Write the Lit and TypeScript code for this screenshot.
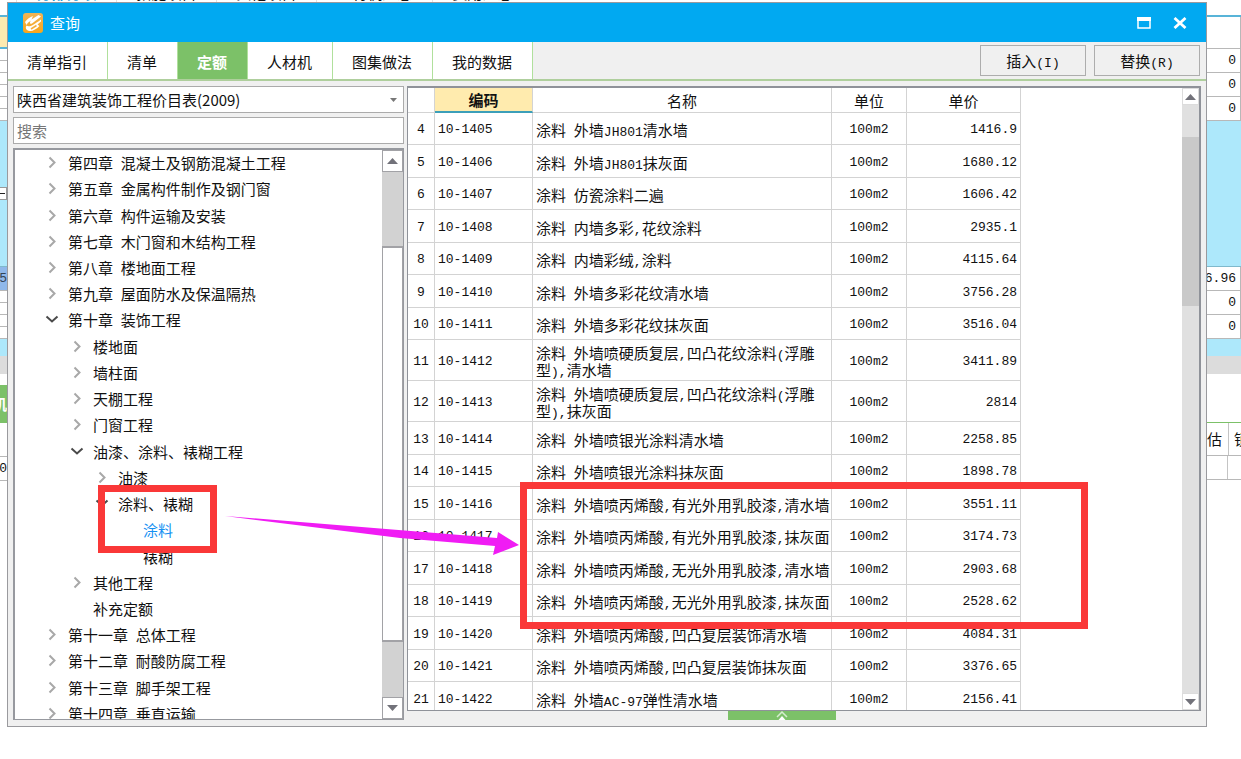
import { LitElement, html, css, svg } from "lit";
import { customElement, property, state } from "lit/decorators.js";
import { classMap } from "lit/directives/class-map.js";

type Node = { text: string; level: number; kind: "closed" | "open" | "leaf"; active?: boolean };
type Row = { no: number; code: string; name: string; price: string };

const node = (text: string, level: number, kind: Node["kind"] = "closed", active = false): Node => ({
  text,
  level,
  kind,
  active,
});

const NODES: Node[] = [
  node("第四章 混凝土及钢筋混凝土工程", 1),
  node("第五章 金属构件制作及钢门窗", 1),
  node("第六章 构件运输及安装", 1),
  node("第七章 木门窗和木结构工程", 1),
  node("第八章 楼地面工程", 1),
  node("第九章 屋面防水及保温隔热", 1),
  node("第十章 装饰工程", 1, "open"),
  node("楼地面", 2),
  node("墙柱面", 2),
  node("天棚工程", 2),
  node("门窗工程", 2),
  node("油漆、涂料、裱糊工程", 2, "open"),
  node("油漆", 3),
  node("涂料、裱糊", 3, "open"),
  node("涂料", 4, "leaf", true),
  node("裱糊", 4, "leaf"),
  node("其他工程", 2),
  node("补充定额", 2, "leaf"),
  node("第十一章 总体工程", 1),
  node("第十二章 耐酸防腐工程", 1),
  node("第十三章 脚手架工程", 1),
  node("第十四章 垂直运输", 1),
];

const ROWS: Row[] = (
  [
    ["涂料 外墙JH801清水墙", "1416.9"],
    ["涂料 外墙JH801抹灰面", "1680.12"],
    ["涂料 仿瓷涂料二遍", "1606.42"],
    ["涂料 内墙多彩,花纹涂料", "2935.1"],
    ["涂料 内墙彩绒,涂料", "4115.64"],
    ["涂料 外墙多彩花纹清水墙", "3756.28"],
    ["涂料 外墙多彩花纹抹灰面", "3516.04"],
    ["涂料 外墙喷硬质复层,凹凸花纹涂料(浮雕型),清水墙", "3411.89"],
    ["涂料 外墙喷硬质复层,凹凸花纹涂料(浮雕型),抹灰面", "2814"],
    ["涂料 外墙喷银光涂料清水墙", "2258.85"],
    ["涂料 外墙喷银光涂料抹灰面", "1898.78"],
    ["涂料 外墙喷丙烯酸,有光外用乳胶漆,清水墙", "3551.11"],
    ["涂料 外墙喷丙烯酸,有光外用乳胶漆,抹灰面", "3174.73"],
    ["涂料 外墙喷丙烯酸,无光外用乳胶漆,清水墙", "2903.68"],
    ["涂料 外墙喷丙烯酸,无光外用乳胶漆,抹灰面", "2528.62"],
    ["涂料 外墙喷丙烯酸,凹凸复层装饰清水墙", "4084.31"],
    ["涂料 外墙喷丙烯酸,凹凸复层装饰抹灰面", "3376.65"],
    ["涂料 外墙AC-97弹性清水墙", "2156.41"],
  ] as [string, string][]
).map(([name, price], i) => ({ no: i + 4, code: `10-${1405 + i}`, name, price }));

/* Half-width characters are set in the monospaced face, the rest in the CJK face. */
const mixed = (text: string) =>
  text
    .split(/([\x20-\x7e]+)/)
    .filter(Boolean)
    .map((part) => (/^[\x20-\x7e]/.test(part) ? html`<span class="mono run">${part}</span>` : part));

const shared = css`
  * {
    box-sizing: border-box;
  }
  button,
  input,
  select {
    font: inherit;
    color: inherit;
    margin: 0;
    padding: 0;
    border: 0;
    border-radius: 0;
    background: none;
  }
  .mono {
    font-family: "Liberation Mono", monospace;
    font-size: 13px;
  }
  .run {
    line-height: 0;
  }
`;

@customElement("scroll-track")
class ScrollTrack extends LitElement {
  @property({ reflect: true }) variant = "light";

  static styles = [
    shared,
    css`
      :host {
        display: flex;
        flex-direction: column;
        flex: 0 0 17px;
        background: #e0e0e0;
      }
      :host([variant="framed"]) {
        flex-basis: 21px;
        background: #d2d2d2;
      }
      .step {
        display: grid;
        place-items: center;
        height: 17px;
        background: #fff;
        border: 1px solid #dcdcdc;
      }
      .before {
        flex: 32 1 0;
      }
      .thumb {
        flex: 169 1 0;
        background: #c9c9c9;
      }
      .after {
        flex: 387 1 0;
      }
      :host([variant="framed"]) .step {
        height: 22px;
        border-color: #a2a2a6;
      }
      :host([variant="framed"]) .before {
        flex-grow: 75;
      }
      :host([variant="framed"]) .thumb {
        flex-grow: 395;
        background: #fff;
        border: 1px solid #a2a2a6;
        border-width: 2px 1px;
      }
      :host([variant="framed"]) .after {
        flex-grow: 56;
      }
    `,
  ];

  render() {
    return html`
      <button class="step" aria-label="向上滚动">
        <svg width="11" height="6" viewBox="0 0 11 6"><path d="M0 6 5.5 0 11 6z" fill="#72727a" /></svg>
      </button>
      <div class="before"></div>
      <div class="thumb"></div>
      <div class="after"></div>
      <button class="step" aria-label="向下滚动">
        <svg width="11" height="6" viewBox="0 0 11 6"><path d="M0 0 5.5 6 11 0z" fill="#72727a" /></svg>
      </button>
    `;
  }
}

@customElement("chapter-tree")
class ChapterTree extends LitElement {
  static styles = [
    shared,
    css`
      :host {
        box-sizing: border-box;
        display: flex;
        flex: 1;
        min-height: 0;
        overflow: hidden;
        background: #fff;
        border: 1px solid #97999f;
        border-width: 2px 1px 1px 2px;
      }
      .list {
        flex: 1;
        display: grid;
        grid-auto-rows: 1fr;
        margin: 0 0 -8px;
        padding: 0;
        list-style: none;
      }
      .item {
        display: flex;
        align-items: center;
        gap: 8px;
        line-height: 20px;
        white-space: nowrap;
      }
      .l1 {
        padding-left: 29px;
      }
      .l2 {
        padding-left: 54px;
      }
      .l3 {
        padding-left: 79px;
      }
      .l4 {
        padding-left: 104px;
      }
      .toggle {
        display: grid;
        place-items: center;
        flex: 0 0 16px;
        height: 16px;
      }
      .active {
        color: #1590f2;
      }
    `,
  ];

  private glyph(kind: Node["kind"]) {
    if (kind === "leaf") return html`<span class="toggle"></span>`;
    const open = kind === "open";
    return html`<button class="toggle" aria-label=${open ? "收起" : "展开"} aria-expanded=${open}>
      <svg width="14" height="14" viewBox="0 0 14 14" fill="none" stroke-width="2">
        ${open
          ? svg`<path d="M1.500 3.500 7 8.500 12.500 3.500" stroke="#4a4a4a"/>`
          : svg`<path d="M4.500 1.500 9.500 6.500 4.500 11.500" stroke="#a8a8a8"/>`}
      </svg>
    </button>`;
  }

  render() {
    return html`
      <ul class="list">
        ${NODES.map(
          (n) => html`<li class="item l${n.level}">
            ${this.glyph(n.kind)}<span class=${classMap({ active: !!n.active })}>${mixed(n.text)}</span>
          </li>`
        )}
      </ul>
      <scroll-track variant="framed"></scroll-track>
    `;
  }
}

@customElement("price-table")
class PriceTable extends LitElement {
  static styles = [
    shared,
    css`
      :host {
        box-sizing: border-box;
        display: flex;
        flex: 1;
        min-height: 0;
        overflow: hidden;
        background: #fff;
        border: 1px solid #8f9299;
        border-width: 2px 2px 1px 1px;
      }
      .area {
        flex: 1;
        overflow: hidden;
      }
      .grid {
        width: 613px;
        table-layout: fixed;
        border-collapse: separate;
        border-spacing: 0;
        line-height: 17px;
      }
      .c-no {
        width: 27px;
      }
      .c-code {
        width: 98px;
      }
      .c-unit {
        width: 75px;
      }
      .c-price {
        width: 114px;
      }
      th,
      td {
        padding: 0 3px;
        border: 0 solid #d3d3d3;
        border-width: 0 1px 1px 0;
        font-weight: normal;
        vertical-align: middle;
      }
      td {
        padding-top: 2px;
      }
      .head {
        height: 25px;
      }
      .sorted {
        background: #ffebae;
        border-bottom: 2px solid #3c9fb9;
        font-weight: bold;
      }
      .row {
        height: 32px;
      }
      .row:nth-child(even) {
        height: 33px;
      }
      .row.tall {
        height: 41px;
      }
      .no,
      .unit {
        text-align: center;
      }
      .no {
        padding-left: 0;
        padding-right: 0;
      }
      .name {
        padding-right: 0;
      }
      .price {
        text-align: right;
      }
    `,
  ];

  render() {
    return html`
      <div class="area">
        <table class="grid">
          <colgroup>
            <col class="c-no" />
            <col class="c-code" />
            <col />
            <col class="c-unit" />
            <col class="c-price" />
          </colgroup>
          <thead>
            <tr class="head">
              <th></th>
              <th class="sorted" scope="col">编码</th>
              <th scope="col">名称</th>
              <th scope="col">单位</th>
              <th scope="col">单价</th>
            </tr>
          </thead>
          <tbody>
            ${ROWS.map(
              (r) => html`<tr class=${classMap({ row: true, tall: r.name.length > 24 })}>
                <td class="no mono">${r.no}</td>
                <td class="mono">${r.code}</td>
                <td class="name">${mixed(r.name)}</td>
                <td class="unit mono">100m2</td>
                <td class="price mono">${r.price}</td>
              </tr>`
            )}
          </tbody>
        </table>
      </div>
      <scroll-track></scroll-track>
    `;
  }
}

@customElement("query-window")
class QueryWindow extends LitElement {
  @state() private tab = "定额";

  static styles = [
    shared,
    css`
      :host {
        box-sizing: border-box;
        display: flex;
        flex-direction: column;
        min-width: 0;
        min-height: 0;
        background: #f0f0f0;
        border: 1px solid #9a9a9e;
      }
      .title {
        display: flex;
        align-items: center;
        flex: 0 0 39px;
        gap: 7px;
        padding: 0 18px 0 15px;
        background: #01a9f1;
        color: #fff;
      }
      .caption {
        flex: 1;
      }
      .ctl {
        display: grid;
        place-items: center;
        width: 16px;
        height: 16px;
      }
      .ctl + .ctl {
        margin-left: 13px;
      }
      .bar {
        display: flex;
        align-items: center;
        flex: 0 0 39px;
        border-bottom: 2px solid #afcf9d;
      }
      .tabs {
        display: flex;
        align-self: stretch;
        flex: 1;
      }
      .tab {
        padding: 3px 20px 0 19px;
        background: #fff;
        border-right: 1px solid #b0e09c;
      }
      .tab.on {
        background: #7cc168;
        color: #fff;
        font-weight: bold;
      }
      .cmd {
        width: 106px;
        height: 31px;
        margin-right: 8px;
        background: #f0f0f0;
        border: 1px solid #adadad;
      }
      .cmd:last-child {
        margin-right: 6px;
      }
      .body {
        display: flex;
        flex: 1;
        min-height: 0;
        gap: 3px;
        padding: 5px 5px 6px;
      }
      .side {
        display: flex;
        flex-direction: column;
        flex: 0 0 391px;
        gap: 4px;
      }
      .field {
        position: relative;
        display: flex;
        flex: 0 0 27px;
        background: #fff;
        border: 1px solid #ababab;
      }
      .field > select,
      .field > input {
        appearance: none;
        width: 100%;
        padding: 0 3px;
        outline: 0;
      }
      .field > input::placeholder {
        color: #767676;
        opacity: 1;
      }
      .caret {
        position: absolute;
        right: 6px;
        top: 11px;
        pointer-events: none;
      }
      .main {
        display: flex;
        flex-direction: column;
        flex: 1;
        min-width: 0;
      }
      .handle {
        display: grid;
        place-items: center;
        flex: 0 0 9px;
        width: 108px;
        margin-left: 321px;
        background: #7cc168;
      }
    `,
  ];

  render() {
    const tabs = ["清单指引", "清单", "定额", "人材机", "图集做法", "我的数据"];
    return html`
      <header class="title">
        <svg width="20" height="20" viewBox="0 0 20 20">
          <defs>
            <linearGradient id="g" x1="0" y1="0" x2="0" y2="1">
              <stop offset="0" stop-color="#f0b456" />
              <stop offset="1" stop-color="#f8a61a" />
            </linearGradient>
          </defs>
          <rect width="20" height="20" rx="3" fill="url(#g)" />
          <path
            d="M2 9C4 6 7 4 10 3L8.500 6.500 15.500 2 18 3.500 9 10.500C7 11.500 6 10 8 7.500 5.500 9 4 10.500 3.500 12z"
            fill="#fff"
          />
          <path d="M3.500 12.500C6 14.500 9 13 18 6.500L18 8.500 14.500 11.500 16.500 13C13 17 7 19.500 4 17 2.500 15.500 2.500 14 3.500 12.500z" fill="#fff" />
          <path d="M8 16 13.500 12.500" stroke="#f6b03a" stroke-width="1.500" />
        </svg>
        <span class="caption">查询</span>
        <button class="ctl" aria-label="最大化">
          <svg width="14" height="12" viewBox="0 0 14 12">
            <path d="M1 1H13V11H1z" fill="none" stroke="#fff" stroke-width="1.500" />
            <path d="M0 0H14V4H0z" fill="#fff" />
          </svg>
        </button>
        <button class="ctl" aria-label="关闭">
          <svg width="14" height="12" viewBox="0 0 14 12">
            <path d="M1.500 1 12.500 11M12.500 1 1.500 11" stroke="#fff" stroke-width="2.800" />
          </svg>
        </button>
      </header>
      <div class="bar">
        <div class="tabs" role="tablist">
          ${tabs.map(
            (t) => html`<button
              role="tab"
              aria-selected=${t === this.tab}
              class=${classMap({ tab: true, on: t === this.tab })}
              @click=${() => (this.tab = t)}
            >
              ${t}
            </button>`
          )}
        </div>
        <button class="cmd">${mixed("插入(I)")}</button>
        <button class="cmd">${mixed("替换(R)")}</button>
      </div>
      <div class="body">
        <div class="side">
          <div class="field">
            <select aria-label="定额库">
              <option>陕西省建筑装饰工程价目表(2009)</option>
            </select>
            <svg class="caret" width="7" height="4" viewBox="0 0 7 4"><path d="M0 0H7L3.500 4z" fill="#777" /></svg>
          </div>
          <div class="field"><input type="text" aria-label="搜索" placeholder="搜索" /></div>
          <chapter-tree></chapter-tree>
        </div>
        <div class="main">
          <price-table></price-table>
          <button class="handle" aria-label="展开面板">
            <svg width="12" height="9" viewBox="0 0 12 9">
              <path d="M1 6 6 1 11 6" fill="none" stroke="#d6edcf" stroke-width="1.500" />
              <path d="M2.500 9 6 5 9.500 9z" fill="#fff" />
            </svg>
          </button>
        </div>
      </div>
    `;
  }
}

@customElement("app-root")
class AppRoot extends LitElement {
  static styles = [
    shared,
    css`
      :host {
        box-sizing: border-box;
        position: relative;
        display: grid;
        grid-template: 2px minmax(0, 1fr) / 7px minmax(0, 1fr) 34px;
        height: 100vh;
        padding-bottom: 32px;
        overflow: hidden;
        background: #fff;
        color: #111;
        font-family: "Noto Sans CJK SC", sans-serif;
        font-size: 15px;
        line-height: 20px;
      }
      .behind {
        grid-column: 1 / -1;
        display: flex;
        align-items: flex-end;
        padding-left: 16px;
        overflow: hidden;
        line-height: 18px;
      }
      .page {
        flex: 0 0 100px;
        text-align: center;
        border-left: 1px solid #e2e2e2;
      }
      .page.wide {
        flex-basis: 116px;
      }
      .page.on {
        color: #1c9ad6;
        font-weight: bold;
      }
      .strip {
        overflow: hidden;
        white-space: nowrap;
      }
      .cell {
        display: flex;
        align-items: center;
        height: 24px;
        border-bottom: 1px solid #b8b8b8;
      }
      .short {
        height: 12px;
      }
      .gap {
        height: 13px;
      }
      .rule {
        height: 2px;
        background: #58b4d8;
      }
      .top {
        height: 32px;
      }
      .cream {
        background: #fdeab0;
        border-bottom: 2px solid #58b4d8;
      }
      .sky {
        height: 146px;
        background: #ade8fb;
        border-bottom: 1px solid #7fb9cc;
      }
      .sky.thin {
        height: 17px;
        border: 0;
      }
      .mark {
        width: 7px;
        height: 13px;
        background: #fff;
        border: 1px solid #999;
        border-left: 0;
      }
      .mark::before {
        content: "";
        display: block;
        width: 5px;
        height: 1px;
        margin-top: 5px;
        background: #222;
      }
      .picked {
        height: 24px;
        background: #8fb8ea;
        color: #345;
      }
      .grey {
        height: 18px;
        background: #dcdcdc;
      }
      .blank {
        height: 48px;
      }
      .blank.small {
        height: 11px;
      }
      .green {
        display: flex;
        align-items: center;
        justify-content: flex-end;
        height: 38px;
        background: #7cc168;
        color: #fff;
        font-weight: bold;
      }
      .num {
        justify-content: flex-end;
        padding-right: 4px;
        border-right: 1px solid #b8b8b8;
      }
      .end {
        justify-content: flex-end;
      }
      .lined {
        border-top: 1px solid #7cc168;
      }
      .pair {
        height: 34px;
      }
      .half {
        display: flex;
        align-items: center;
        align-self: stretch;
        justify-content: flex-end;
        flex: 0 0 21px;
        padding-right: 6px;
        border-right: 1px solid #c4c4c4;
      }
      .half + span {
        padding-left: 5px;
      }
      .notes {
        position: absolute;
        left: 0;
        top: 0;
        pointer-events: none;
      }
    `,
  ];

  render() {
    return html`
      <div class="behind">
        <span class="page on">分部分项</span>
        <span class="page">措施项目</span>
        <span class="page">其他项目</span>
        <span class="page wide">人材机汇总</span>
        <span class="page">费用汇总</span>
      </div>
      <div class="strip">
        <div class="gap"></div>
        <div class="rule"></div>
        <div class="top cream"></div>
        ${[1, 2, 3, 4, 5, 6].map(() => html`<div class="cell short"></div>`)}
        <div class="cell sky"><div class="mark"></div></div>
        <div class="cell picked end mono">-5</div>
        ${[1, 2, 3, 4].map(() => html`<div class="cell short"></div>`)}
        <div class="sky thin"></div>
        <div class="grey"></div>
        <div class="blank small"></div>
        <div class="green">机</div>
        <div class="cell pair"></div>
        <div class="cell end mono">00</div>
      </div>
      <query-window></query-window>
      <div class="strip">
        <div class="gap"></div>
        <div class="rule"></div>
        <div class="cell num top"></div>
        ${["0", "0", "0"].map((v) => html`<div class="cell num mono">${v}</div>`)}
        <div class="sky"></div>
        ${["6.96", "0", "0"].map((v) => html`<div class="cell num mono">${v}</div>`)}
        <div class="sky thin"></div>
        <div class="grey"></div>
        <div class="blank"></div>
        <div class="cell pair lined"><span class="half">估</span><span>锁</span></div>
        <div class="cell"><span class="half"></span></div>
      </div>
      <svg class="notes" width="1241" height="759" viewBox="0 0 1241 759">
        <g fill="none" stroke="#fa3838" stroke-width="7">
          <rect x="101.500" y="488.500" width="112" height="61" />
          <rect x="523.500" y="485.500" width="561" height="140" />
        </g>
        <path d="M225 516 497 538 498 532 519 545 493 555 495 546 400 538z" fill="#f01cf4" />
      </svg>
    `;
  }
}
